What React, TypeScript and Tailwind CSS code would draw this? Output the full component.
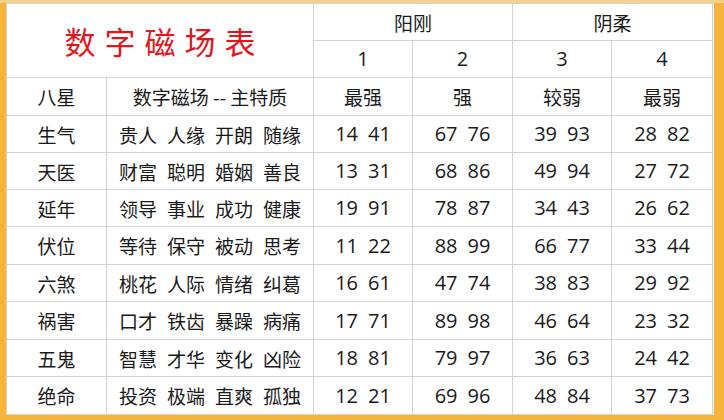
import React from "react";

const rows: [string, string[], string, string, string, string][] = [
  ["生气", ["贵人", "人缘", "开朗", "随缘"], "14 41", "67 76", "39 93", "28 82"],
  ["天医", ["财富", "聪明", "婚姻", "善良"], "13 31", "68 86", "49 94", "27 72"],
  ["延年", ["领导", "事业", "成功", "健康"], "19 91", "78 87", "34 43", "26 62"],
  ["伏位", ["等待", "保守", "被动", "思考"], "11 22", "88 99", "66 77", "33 44"],
  ["六煞", ["桃花", "人际", "情绪", "纠葛"], "16 61", "47 74", "38 83", "29 92"],
  ["祸害", ["口才", "铁齿", "暴躁", "病痛"], "17 71", "89 98", "46 64", "23 32"],
  ["五鬼", ["智慧", "才华", "变化", "凶险"], "18 81", "79 97", "36 63", "24 42"],
  ["绝命", ["投资", "极端", "直爽", "孤独"], "12 21", "69 96", "48 84", "37 73"],
];

const cell = "bg-white flex items-center justify-center whitespace-pre";
const num = '"Open Sans", "Noto Sans CJK SC", sans-serif';

function Num({ v }: { v: string }) {
  const [a, b] = v.split(" ");
  return (
    <div className={`${cell} gap-[10px] text-[20px]`} style={{ fontFamily: num }}>
      <span>{a}</span>
      <span>{b}</span>
    </div>
  );
}

export default function App() {
  return (
    <div
      className="w-[724px] h-[420px] bg-[#f6b53a] border-t-[3px] border-[#f2cf8c] pl-[6px] overflow-hidden"
      style={{ fontFamily: '"Noto Sans CJK SC", "Noto Sans", sans-serif' }}
    >
      <div className="w-[708px] pr-[1px] bg-[#f1f1f1]">
        <div className="grid w-[707px] grid-cols-[99px_206px_98px_99px_98px_100px] grid-rows-[36px_36px_37px_36px_36px_36px_37px_36px_37px_36px_37px] gap-px bg-[#d3d3d3] border border-[#d3d3d3] text-[19px] text-[#1a1a1a] leading-none">
          <div className={`${cell} col-span-2 row-span-2 text-[31px] text-[#e3161c] tracking-[9px] pl-[9px]`}>
            数字磁场表
          </div>
          <div className={`${cell} col-span-2`}>阳刚</div>
          <div className={`${cell} col-span-2`}>阴柔</div>
          {["1", "2", "3", "4"].map((n) => (
            <div key={n} className={`${cell} text-[20px]`} style={{ fontFamily: num }}>
              {n}
            </div>
          ))}
          <div className={cell}>八星</div>
          <div className={cell}>数字磁场 -- 主特质</div>
          <div className={cell}>最强</div>
          <div className={cell}>强</div>
          <div className={cell}>较弱</div>
          <div className={cell}>最弱</div>
          {rows.map((r) => (
            <React.Fragment key={r[0]}>
              <div className={cell}>{r[0]}</div>
              <div className={`${cell} gap-[10px]`}>
                {r[1].map((w) => (
                  <span key={w}>{w}</span>
                ))}
              </div>
              <Num v={r[2]} />
              <Num v={r[3]} />
              <Num v={r[4]} />
              <Num v={r[5]} />
            </React.Fragment>
          ))}
        </div>
      </div>
    </div>
  );
}
